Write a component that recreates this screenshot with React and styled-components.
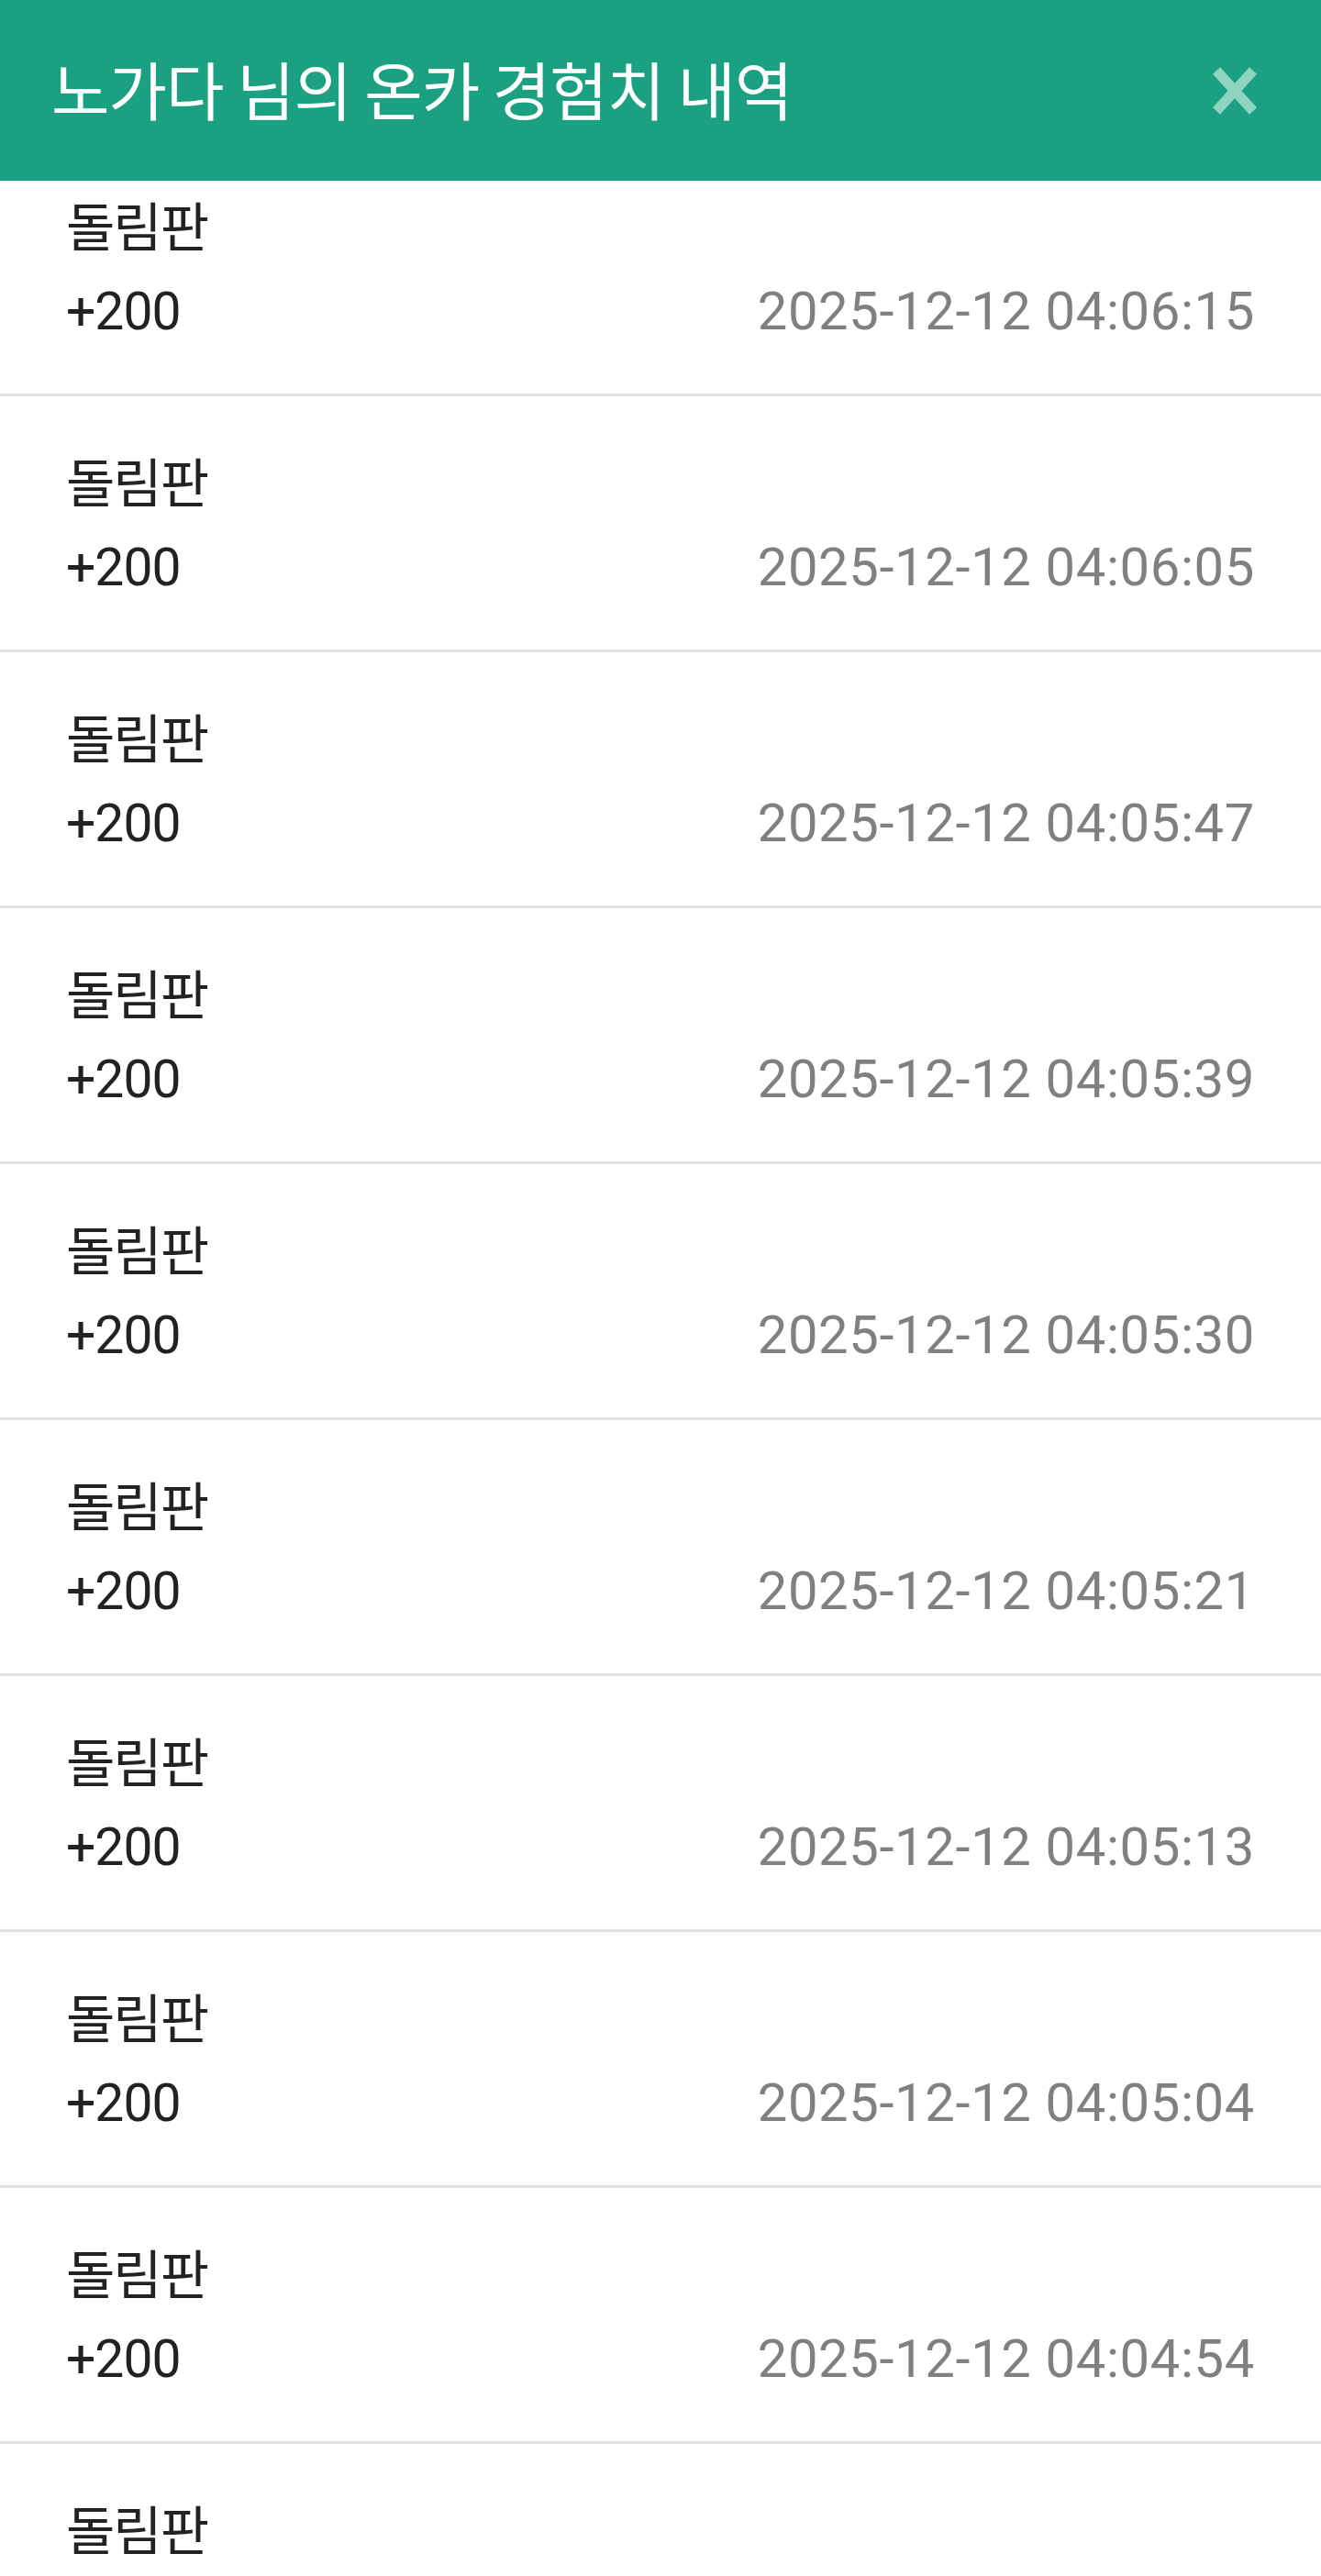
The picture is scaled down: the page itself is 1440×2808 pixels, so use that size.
import React from "react";
import styled, { createGlobalStyle } from "styled-components";

const Global = createGlobalStyle`
  html, body {
    margin: 0;
    padding: 0;
    background: #ffffff;
  }
  body {
    font-family: Roboto, "Noto Sans CJK KR", sans-serif;
    -webkit-font-smoothing: antialiased;
  }
`;

const Page = styled.div`
  width: 1440px;
  background: #ffffff;
`;

const Header = styled.header`
  position: fixed;
  top: 0;
  left: 0;
  right: 0;
  height: 197px;
  z-index: 10;
  background: #1ba081;
  display: flex;
  align-items: center;
  justify-content: space-between;
  padding: 0 68px 0 56px;
  box-sizing: border-box;
`;

const Title = styled.h1`
  margin: 0 0 4px;
  color: #ffffff;
  font-family: "Noto Sans CJK KR", sans-serif;
  font-weight: 400;
  font-size: 69px;
  line-height: 1;
  letter-spacing: -1px;
`;

const CloseButton = styled.button`
  border: 0;
  padding: 0;
  margin: 0;
  background: transparent;
  width: 52px;
  height: 56px;
  display: flex;
  align-items: center;
  justify-content: center;
  cursor: pointer;
`;

const List = styled.ul`
  list-style: none;
  margin: 0;
  padding: 153px 0 0;
`;

const Row = styled.li`
  box-sizing: border-box;
  height: 279px;
  padding: 51px 72px 0 72px;
  border-bottom: 3px solid #e0e0e0;
  display: flex;
  flex-direction: column;
  gap: 15px;
`;

const Label = styled.div`
  font-family: "Noto Sans CJK KR", sans-serif;
  font-size: 58px;
  line-height: 80px;
  color: #222222;
  letter-spacing: -2px;
`;

const InfoLine = styled.div`
  display: flex;
  justify-content: space-between;
  align-items: baseline;
  line-height: 80px;
`;

const Amount = styled.span`
  font-family: Roboto, sans-serif;
  font-size: 57px;
  color: #222222;
  letter-spacing: -1px;
`;

const Stamp = styled.span`
  font-family: Roboto, sans-serif;
  font-size: 58px;
  color: #808080;
  letter-spacing: 0.6px;
`;

const CloseIcon = () => (
  <svg width="50" height="54" viewBox="0 0 50 54">
    <path
      d="M5 5 L45 49 M45 5 L5 49"
      stroke="#8fd4c1"
      strokeWidth="11"
      strokeLinecap="butt"
      fill="none"
    />
  </svg>
);

const items = [
  "2025-12-12 04:06:15",
  "2025-12-12 04:06:05",
  "2025-12-12 04:05:47",
  "2025-12-12 04:05:39",
  "2025-12-12 04:05:30",
  "2025-12-12 04:05:21",
  "2025-12-12 04:05:13",
  "2025-12-12 04:05:04",
  "2025-12-12 04:04:54",
  "2025-12-12 04:04:45",
];

export default function App() {
  return (
    <Page>
      <Global />
      <Header>
        <Title>노가다 님의 온카 경험치 내역</Title>
        <CloseButton aria-label="닫기">
          <CloseIcon />
        </CloseButton>
      </Header>
      <List>
        {items.map((t) => (
          <Row key={t}>
            <Label>돌림판</Label>
            <InfoLine>
              <Amount>+200</Amount>
              <Stamp>{t}</Stamp>
            </InfoLine>
          </Row>
        ))}
      </List>
    </Page>
  );
}
